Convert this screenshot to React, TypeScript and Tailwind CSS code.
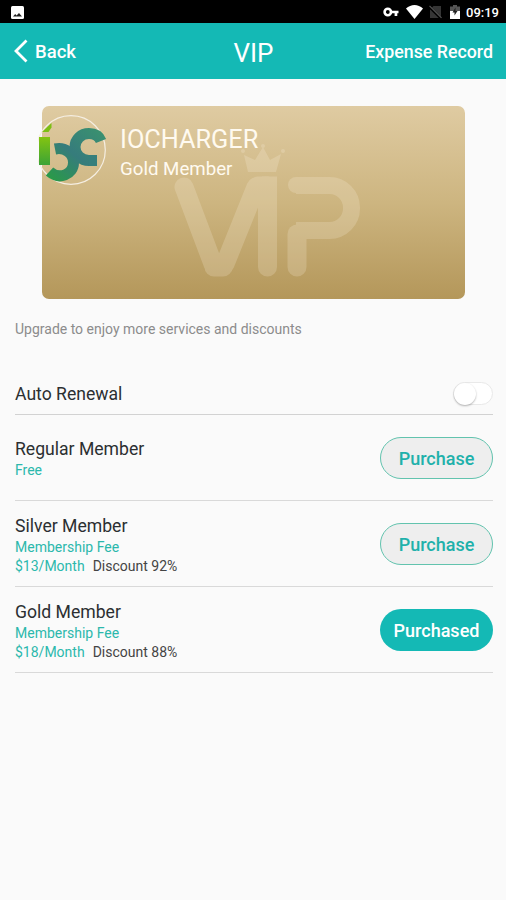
const members = [
  { name: "Regular Member", free: true },
  { name: "Silver Member", price: "$13/Month", discount: "Discount 92%" },
  { name: "Gold Member", price: "$18/Month", discount: "Discount 88%", purchased: true },
];

function StatusBar() {
  return (
    <div className="flex h-[23px] items-center bg-black pt-px pr-[7px] pl-[11px] text-white">
      <svg width="13" height="13" viewBox="0 0 13 13">
        <rect width="13" height="13" rx="1.5" fill="#fff" />
        <path d="M2 10.5 4.2 8 5.5 9.5 8 7 11 10.5Z" fill="#222" />
      </svg>
      {/* vpn key */}
      <svg className="ml-auto" width="16" height="10" viewBox="0 0 16 10">
        <circle cx="4.8" cy="5" r="3.2" fill="none" stroke="#fff" strokeWidth="2.6" />
        <path d="M8 3.7H15.5V6.3H14.3V9H11.6V6.3H8Z" fill="#fff" />
      </svg>
      <svg className="ml-[7px]" width="17" height="14" viewBox="0 0 17 14">
        <path d="M0 3.6C5-1.2 12-1.2 17 3.6L8.5 14Z" fill="#fff" />
      </svg>
      {/* no sim */}
      <svg className="ml-[6px]" width="13" height="14" viewBox="0 0 13 14">
        <path d="M4.5 1H12V13H1V4.5Z" fill="#353535" />
        <path d="M0 1.5 12 13.5" stroke="#000" strokeWidth="2.6" />
        <path d="M.5 .8 12.5 12.8" stroke="#555" strokeWidth="1.2" />
      </svg>
      {/* battery */}
      <svg className="ml-[8px]" width="10" height="14" viewBox="0 0 10 14">
        <path d="M3 0H7V1.5H10V7H0V1.5H3Z" fill="#555" />
        <path d="M0 6H10V14H0Z" fill="#fff" />
        <path d="M5.5 2.5 2.5 7.5H4.5V10.5L7.5 6H5.5Z" fill="#222" />
      </svg>
      <span className="ml-[6px] w-[33px] text-[13px] leading-none font-medium whitespace-nowrap">09:19</span>
    </div>
  );
}

function Header() {
  return (
    <header className="grid h-14 grid-cols-3 items-center bg-[#14b9b5] pr-[13px] pl-[14px] text-white">
      <div className="flex items-center gap-[7px]">
        <svg width="14" height="24" viewBox="0 0 14 24" fill="none" stroke="#fff" strokeWidth="2.8">
          <path d="M12.5 1.5 2 12 12.5 22.5" />
        </svg>
        <span className="pt-[2px] text-[18.5px] leading-6 font-medium">Back</span>
      </div>
      <h1 className="pt-[3px] text-center text-[26px] leading-8">VIP</h1>
      <span className="justify-self-end pt-[2px] text-[17.8px] leading-6 font-medium whitespace-nowrap">Expense Record</span>
    </header>
  );
}

function Logo() {
  return (
    <svg width="70" height="72" viewBox="0 0 70 72" fill="none">
      <defs>
        <linearGradient id="stem" x1="0" y1="0" x2="0" y2="1">
          <stop offset="0" stopColor="#84c411" />
          <stop offset="1" stopColor="#3ba336" />
        </linearGradient>
        <linearGradient id="ring" gradientUnits="userSpaceOnUse" x1="14" y1="66" x2="58" y2="14">
          <stop offset="0" stopColor="#2a9a48" />
          <stop offset="0.5" stopColor="#367c7c" />
          <stop offset="1" stopColor="#3a9070" />
        </linearGradient>
      </defs>
      <circle cx="33" cy="36" r="34.3" stroke="#f5eee2" strokeWidth="1.2" />
      <rect x="1" y="23" width="11" height="28" fill="url(#stem)" />
      <path d="M4 18 13.5 9V13.5L10.5 18Z" fill="#7cbf14" />
      <g stroke="url(#ring)" strokeWidth="11">
        <path d="M17 35C27 33 35.500 39 35.500 48.500 35.500 61 21 66 11.500 57.500" />
        <path d="M63 27C61 22 56.500 19.500 51 19.500 43 19.500 37 25.500 37 33 37 40.500 43 46.500 51 46.500H53" />
      </g>
      <rect x="51" y="41" width="8" height="11" fill="#367f7c" />
    </svg>
  );
}

// Watermark behind the member name, built from thick rounded bars
function Emblem() {
  return (
    <svg className="absolute top-[37px] left-[130px]" width="192" height="138" viewBox="0 0 192 138" fill="none">
      <defs>
        <clipPath id="loop">
          <rect x="124" y="20" width="68" height="90" />
        </clipPath>
      </defs>
      <g opacity="0.2" stroke="#fff6e6" strokeWidth="19" strokeLinecap="round">
        <line x1="12" y1="44" x2="41" y2="121" />
        <line x1="42" y1="124" x2="51" y2="124" />
        <line x1="53" y1="121" x2="84" y2="44" />
        <line x1="86" y1="43" x2="95" y2="43" />
        <line x1="95.5" y1="43" x2="95.5" y2="124" />
        <rect x="90" y="33.5" width="15" height="14" fill="#fff6e6" stroke="none" />
        <line x1="125" y1="91" x2="125" y2="124" />
        <line x1="124" y1="42" x2="127" y2="42" strokeWidth="16" />
        <rect x="90" y="42.5" width="89.5" height="45" rx="22" strokeWidth="17" clipPath="url(#loop)" />
      </g>
      <g opacity="0.2" fill="#fff6e6">
        <path d="M76 29 72 12 83 17 91 4 98 17 109 11 104 29Z" />
        <circle cx="71" cy="8" r="2" />
        <circle cx="91" cy="3" r="2" />
        <circle cx="111" cy="8" r="2" />
      </g>
    </svg>
  );
}

function MemberCard() {
  return (
    <div className="relative mt-[27px] mr-[41px] ml-[42px] h-[193px] rounded-[7px] bg-gradient-to-b from-[#dfcba2] via-[#cdb580] to-[#b4975a]">
      <Emblem />
      <div className="relative flex pt-[8px] text-[#fffaf0]">
        <div className="-ml-[4px]">
          <Logo />
        </div>
        <div className="ml-[12px] pt-[9px]">
          <p className="text-[25.3px] leading-[34px]">IOCHARGER</p>
          <p className="text-[18.7px] leading-[24px]">Gold Member</p>
        </div>
      </div>
    </div>
  );
}

export default function App() {
  return (
    <div className="h-[900px] w-[506px] overflow-hidden bg-[#fafafa] font-['Roboto',sans-serif] text-[#2b2f31]">
      <StatusBar />
      <Header />
      <MemberCard />
      <main className="pr-[13px] pl-[15px]">
        <p className="mt-[20px] text-[14px] leading-5 text-[#8c8c8c]">Upgrade to enjoy more services and discounts</p>

        <div className="mt-[33px] flex h-[43px] items-center justify-between border-b border-[#d2d2d2]">
          <span className="pt-[2px] text-[17.6px]">Auto Renewal</span>
          <button className="h-[23px] w-[40px] rounded-full border border-[#e9e9e9] bg-white">
            <span className="block size-[22px] rounded-full bg-white shadow-[0_1px_2px_rgba(0,0,0,0.3)]" />
          </button>
        </div>

        {members.map((member) => (
          <div key={member.name} className="flex h-[86px] items-center justify-between border-b border-[#d9d9d9]">
            <div className={member.free ? "pt-px" : "pt-[3px]"}>
              <p className="text-[17.6px] leading-[24px]">{member.name}</p>
              {member.free ? (
                <p className="text-[14px] leading-[19px] text-[#2bb8ac]">Free</p>
              ) : (
                <>
                  <p className="text-[14px] leading-[19px] text-[#2bb8ac]">Membership Fee</p>
                  <p className="flex gap-2 text-[14px] leading-[19px]">
                    <span className="text-[#2bb8ac]">{member.price}</span>
                    <span className="text-[#444]">{member.discount}</span>
                  </p>
                </>
              )}
            </div>
            {member.purchased ? (
              <button className="h-[42px] w-[113px] rounded-full bg-[#14b9b5] pt-px text-[18px] font-medium text-white">Purchased</button>
            ) : (
              <button className="h-[42px] w-[113px] rounded-full border border-[#62c3ae] bg-[#eee] pt-px text-[18px] font-medium text-[#1fb1ab]">
                Purchase
              </button>
            )}
          </div>
        ))}
      </main>
    </div>
  );
}
